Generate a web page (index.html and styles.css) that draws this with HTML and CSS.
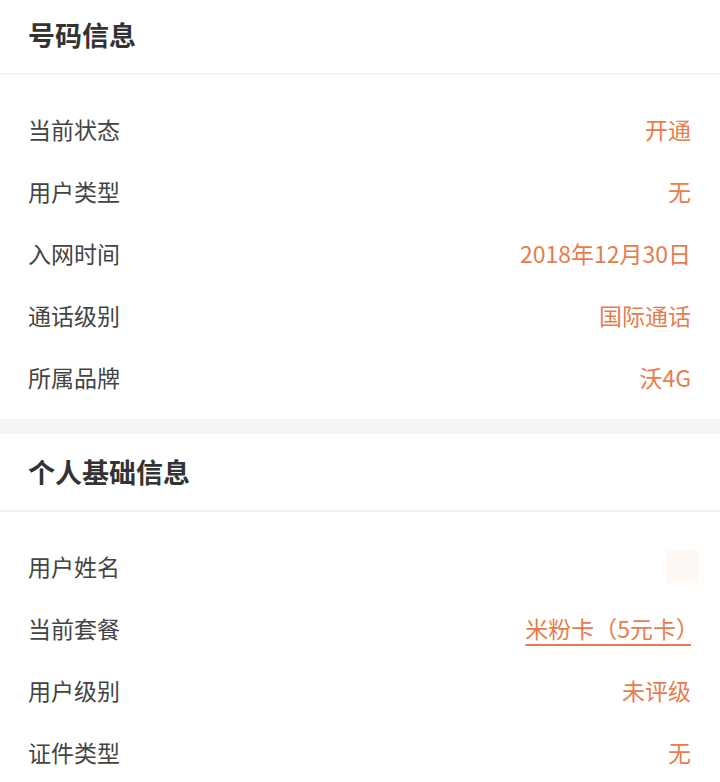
FILE: index.html
```html
<!DOCTYPE html>
<html lang="zh-CN">
<head>
    <meta charset="UTF-8">
    <title>号码信息</title>
    <link rel="stylesheet" href="styles.css">
</head>
<body>
    <div class="page">
        <div class="section">
            <h2 class="section-title">号码信息</h2>
            <ul class="info-list">
                <li class="info-row"><span class="label">当前状态</span><span class="value">开通</span></li>
                <li class="info-row"><span class="label">用户类型</span><span class="value">无</span></li>
                <li class="info-row"><span class="label">入网时间</span><span class="value">2018年12月30日</span></li>
                <li class="info-row"><span class="label">通话级别</span><span class="value">国际通话</span></li>
                <li class="info-row"><span class="label">所属品牌</span><span class="value">沃4G</span></li>
            </ul>
        </div>

        <div class="section">
            <h2 class="section-title">个人基础信息</h2>
            <ul class="info-list">
                <li class="info-row"><span class="label">用户姓名</span><span class="value masked"></span></li>
                <li class="info-row"><span class="label">当前套餐</span><a class="value link" href="#">米粉卡（5元卡<span class="close-paren">）</span></a></li>
                <li class="info-row"><span class="label">用户级别</span><span class="value">未评级</span></li>
                <li class="info-row"><span class="label">证件类型</span><span class="value">无</span></li>
            </ul>
        </div>
    </div>
</body>
</html>
```

FILE: styles.css
```css
body {
    margin: 0;
    padding: 0;
    background-color: #f4f4f4;
    font-family: "Noto Sans CJK SC", "Noto Sans", sans-serif;
}
.page {
    margin-top: -3px; /* page is scrolled a little */
}
.section {
    background-color: #fff;
    margin-bottom: 15px;
}
.section-title {
    margin: 0;
    height: 76px;
    line-height: 76px;
    padding: 0 28px;
    font-size: 27px;
    font-weight: bold;
    color: #333;
    border-bottom: 2px solid #f2f2f2;
}
.info-list {
    list-style: none;
    margin: 0;
    padding: 23px 29px 11px 28px;
}
.info-row {
    display: flex;
    justify-content: space-between;
    align-items: center;
    height: 62px;
    font-size: 23px;
}
.label {
    color: #444;
}
.value {
    color: #e97c4c;
}
.link {
    text-decoration: underline;
    text-underline-offset: 6px;
    text-decoration-thickness: 2px;
}
.close-paren {
    letter-spacing: -8px;
}
.masked {
    width: 33px;
    height: 33px;
    margin-right: -8px;
    background-color: #fef9f5;
}
```
